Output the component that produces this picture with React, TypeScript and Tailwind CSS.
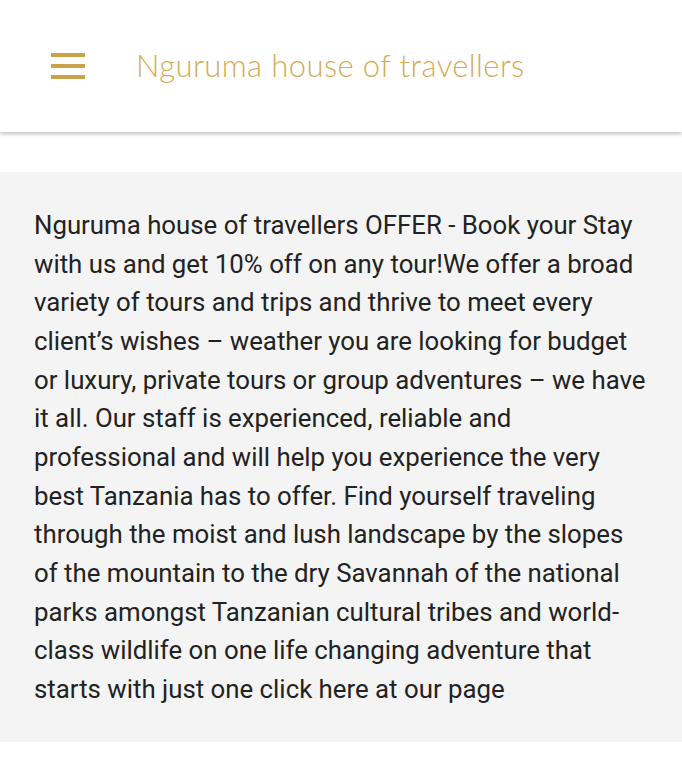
export default function App() {
  return (
    <div className="min-h-screen bg-white" style={{ fontFamily: "Roboto, 'Liberation Sans', sans-serif" }}>
      {/* header */}
      <header className="relative z-10 flex h-[132px] items-center bg-white shadow-[0_2px_4px_rgba(0,0,0,0.25)]">
        <button className="ml-[51px] flex w-[34px] flex-col gap-[7px]" aria-label="menu">
          <span className="block h-[4px] w-full bg-[#c9a24c]" />
          <span className="block h-[4px] w-full bg-[#c9a24c]" />
          <span className="block h-[4px] w-full bg-[#c9a24c]" />
        </button>
        <h1
          className="ml-[51px] pb-[2px] text-[31px] font-light tracking-[0.4px] text-[#d3ab57]"
          style={{ fontFamily: "Lato, 'Open Sans', sans-serif" }}
        >
          Nguruma house of travellers
        </h1>
      </header>

      <div className="h-[40px]" />

      {/* offer text */}
      <section className="bg-[#f4f4f4] pb-[33px] pl-[34px] pr-[34px] pt-[34px]">
        <p className="text-[25.8px] leading-[38.67px] text-[#222222]">
          Nguruma house of travellers OFFER - Book your Stay with us and get 10% off on any tour!We offer a broad
          variety of tours and trips and thrive to meet every client’s wishes – weather you are looking for budget
          or luxury, private tours or group adventures – we have it all. Our staff is experienced, reliable and
          professional and will help you experience the very best Tanzania has to offer. Find yourself traveling
          through the moist and lush landscape by the slopes of the mountain to the dry Savannah of the national
          parks amongst Tanzanian cultural tribes and world-class wildlife on one life changing adventure that
          starts with just one click here at our page
        </p>
      </section>
    </div>
  );
}
